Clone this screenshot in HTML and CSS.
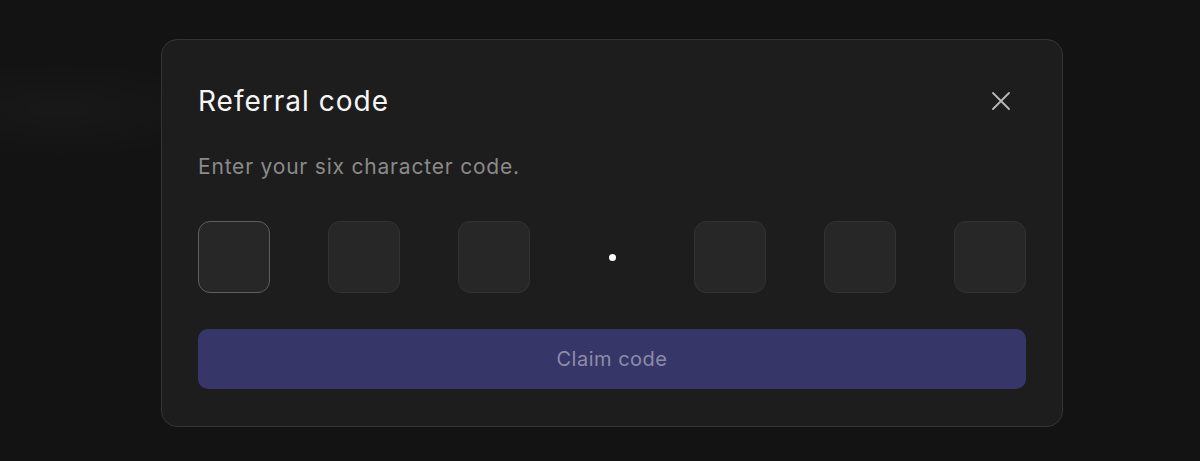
FILE: index.html
```html
<!DOCTYPE html>
<html lang="en">
<head>
<meta charset="utf-8">
<title>Referral code</title>
<link rel="stylesheet" href="styles.css">
</head>
<body>
<main class="page">
  <section class="dialog" role="dialog" aria-labelledby="dlg-title">
    <header class="dialog-head">
      <h1 id="dlg-title" class="dialog-title">Referral code</h1>
      <button class="close-btn" aria-label="Close">
        <svg width="20" height="20" viewBox="0 0 20 20" fill="none" stroke="currentColor" stroke-width="1.8" stroke-linecap="round">
          <path d="M2 2L18 18M18 2L2 18"/>
        </svg>
      </button>
    </header>
    <p class="dialog-sub">Enter your six character code.</p>
    <div class="code-row">
      <input class="code-box is-focus" maxlength="1" aria-label="Character 1">
      <input class="code-box" maxlength="1" aria-label="Character 2">
      <input class="code-box" maxlength="1" aria-label="Character 3">
      <span class="code-sep"><span class="dot"></span></span>
      <input class="code-box" maxlength="1" aria-label="Character 4">
      <input class="code-box" maxlength="1" aria-label="Character 5">
      <input class="code-box" maxlength="1" aria-label="Character 6">
    </div>
    <button class="claim-btn" disabled>Claim code</button>
  </section>
</main>
</body>
</html>
```
FILE: styles.css
```css
* { box-sizing: border-box; }
html, body { margin: 0; height: 100%; }
body {
  background: #131313;
  font-family: "Inter", "Noto Sans", sans-serif;
  color: #fff;
}
.page {
  min-height: 461px;
  display: flex;
  justify-content: center;
  padding-top: 39px;
  padding-left: 24px;
  background:
    radial-gradient(ellipse 260px 70px at 60px 110px, rgba(255,255,255,0.025), transparent 70%),
    #131313;
}
.dialog {
  width: 902px;
  height: 388px;
  background: #1d1d1d;
  border: 1px solid #343434;
  border-radius: 16px;
  padding: 36px 36px 37px 36px;
  display: flex;
  flex-direction: column;
}
.dialog-head {
  height: 50px;
  display: flex;
  align-items: center;
  justify-content: space-between;
}
.dialog-title {
  margin: 0;
  font-size: 28px;
  font-weight: 400;
  letter-spacing: 1px;
  color: #f6f6f6;
}
.close-btn {
  width: 36px;
  height: 36px;
  margin-right: 7px;
  background: none;
  border: 0;
  padding: 0;
  color: #b9b9b9;
  display: flex;
  align-items: center;
  justify-content: center;
}
.dialog-sub {
  margin: 27px 0 0;
  font-size: 21px;
  line-height: 28px;
  letter-spacing: 0.8px;
  color: #8a8a8a;
}
.code-row {
  margin-top: 40px;
  display: flex;
  justify-content: space-between;
  align-items: center;
}
.code-box {
  width: 72px;
  height: 72px;
  background: #272727;
  border: 1px solid #323232;
  border-radius: 12px;
  outline: none;
  color: #fff;
  font: inherit;
  font-size: 28px;
  text-align: center;
}
.code-box.is-focus { border-color: #5f5f5f; }
.code-sep {
  width: 48px;
  display: flex;
  justify-content: center;
  align-items: center;
}
.dot {
  width: 7px;
  height: 7px;
  border-radius: 50%;
  background: #fff;
}
.claim-btn {
  margin-top: 36px;
  height: 60px;
  width: 100%;
  background: #373669;
  border: 0;
  border-radius: 10px;
  font-family: inherit;
  font-size: 20px;
  letter-spacing: 0.5px;
  color: #8d8ca8;
}
```
